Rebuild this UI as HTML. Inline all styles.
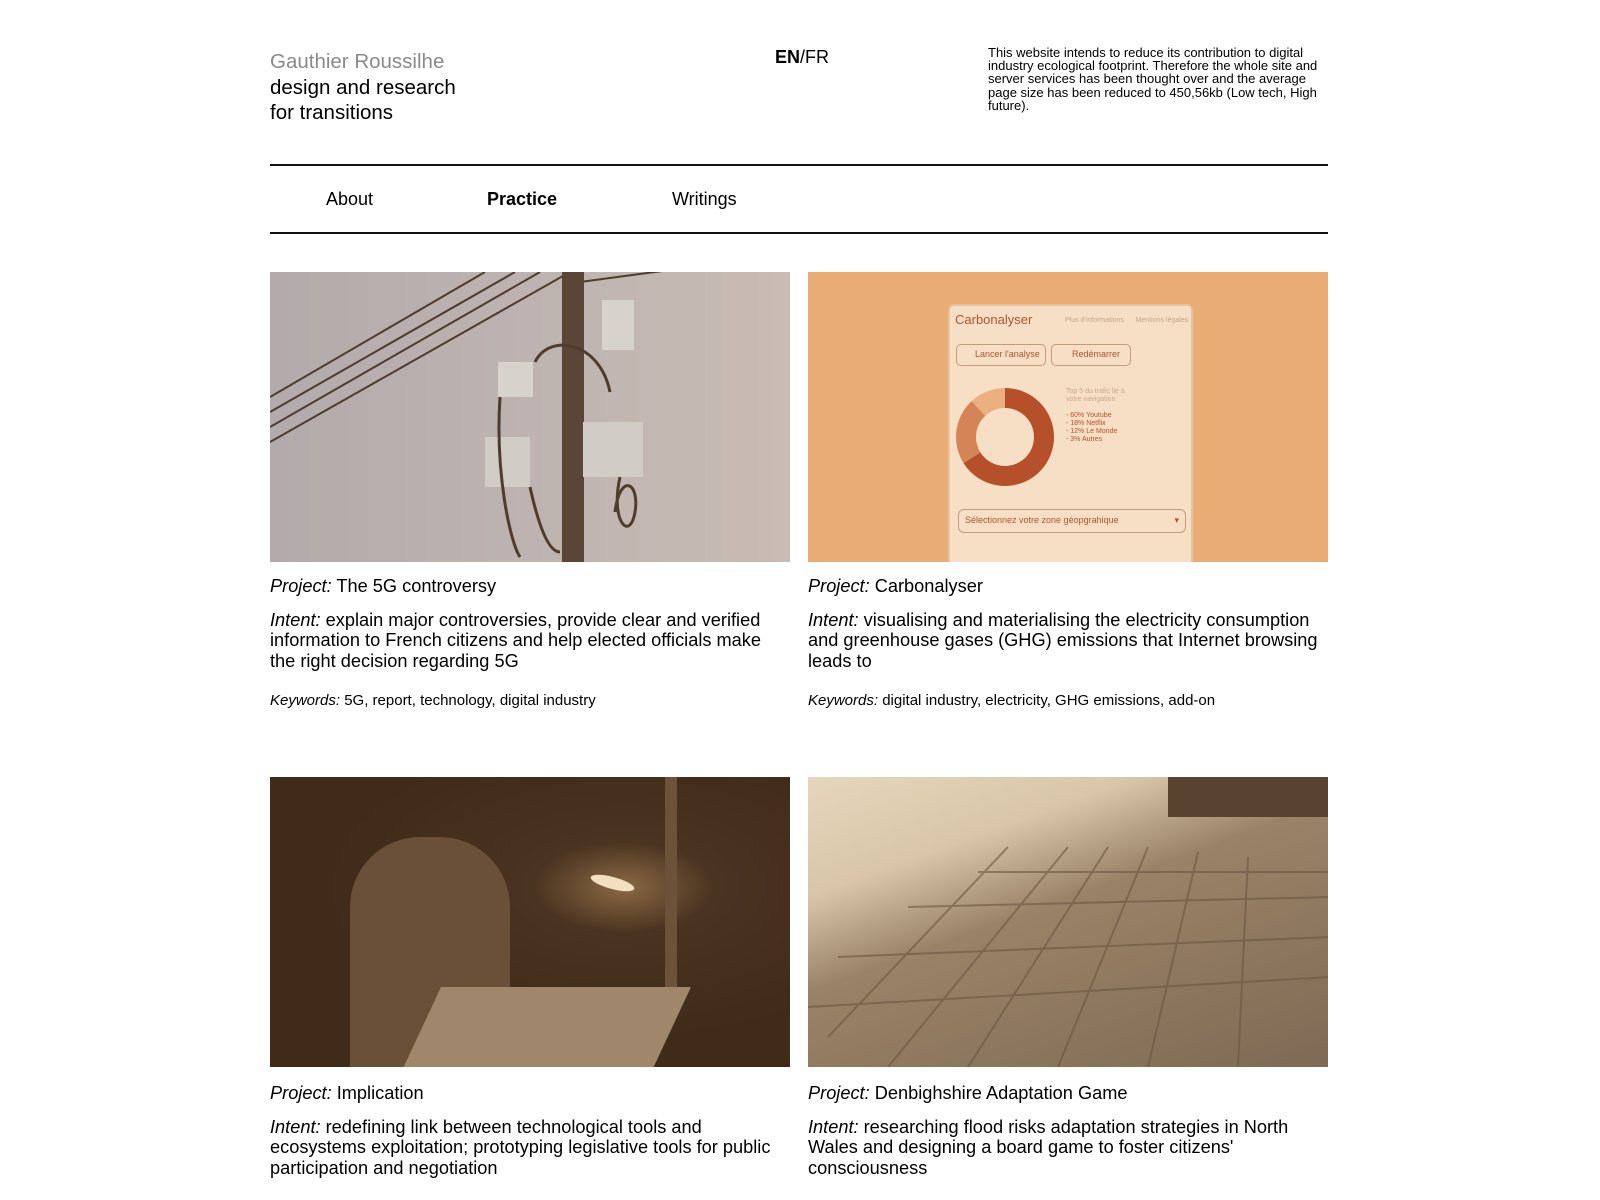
<!DOCTYPE html>
<html><head><meta charset="utf-8"><style>
*{margin:0;padding:0;box-sizing:border-box}
body{width:1600px;height:1200px;overflow:hidden;background:#fff;font-family:"Liberation Sans",sans-serif;color:#000;position:relative}
.a{position:absolute}
.name{left:270px;top:49px;font-size:20.5px;line-height:25.5px}
.name .g{color:#8a8a8a}
.lang{left:775px;top:47px;font-size:18px}
.note{left:988px;top:46px;width:345px;font-size:13px;line-height:13.2px}
.line{left:270px;width:1058px;height:2px;background:#111}
.nav{top:189px;font-size:18px}
.img{width:520px;height:290px;overflow:hidden}
.cap{font-size:18.2px;line-height:20.5px;width:518px}
.kw{font-size:15px}
</style></head><body>
<div class="a name"><span class="g">Gauthier Roussilhe</span><br>design and research<br>for transitions</div>
<div class="a lang"><b>EN</b>/FR</div>
<div class="a note">This website intends to reduce its contribution to digital industry ecological footprint. Therefore the whole site and server services has been thought over and the average page size has been reduced to 450,56kb (Low tech, High future).</div>
<div class="a line" style="top:164px"></div>
<div class="a nav" style="left:326px">About</div>
<div class="a nav" style="left:487px;font-weight:bold">Practice</div>
<div class="a nav" style="left:672px">Writings</div>
<div class="a line" style="top:232px"></div>

<div class="a img" style="left:270px;top:272px;background:linear-gradient(90deg,#b3aaab,#c8bcb4)">
<svg width="520" height="290">
<g stroke="#4e3c2e" stroke-width="2" fill="none">
<path d="M0 125 L215 0"/><path d="M0 140 L245 0"/><path d="M0 155 L270 0"/><path d="M0 170 L300 0"/><path d="M310 10 L400 -2"/>
</g>
<rect x="292" y="0" width="22" height="290" fill="#5a4636"/>
<rect x="228" y="90" width="35" height="35" fill="#d8d2cc"/>
<rect x="332" y="28" width="32" height="50" fill="#d8d2cc"/>
<rect x="215" y="165" width="45" height="50" fill="#d2ccc6"/>
<rect x="313" y="150" width="60" height="55" fill="#d2ccc6"/>
<g stroke="#4e3c2e" stroke-width="3" fill="none"><path d="M230 125 C225 200 240 270 250 285"/><path d="M350 205 C340 250 360 270 365 240 C370 210 350 200 345 240"/><path d="M265 90 C280 60 330 70 340 120"/><path d="M260 215 C270 260 280 280 290 280"/></g>
</svg></div>

<div class="a img" style="left:808px;top:272px;background:#e8ac74">
<div class="a" style="left:140px;top:32px;width:245px;height:262px;background:#f6dfc4;border:2px solid #e3c3a0;border-radius:6px"></div>
<div class="a" style="left:147px;top:40px;color:#b4522e;font-size:13px">Carbonalyser</div>
<div class="a" style="left:257px;top:45px;color:#c7a68a;font-size:7px">Plus d'informations &nbsp;&nbsp;&nbsp;&nbsp; Mentions légales</div>
<div class="a" style="left:148px;top:72px;width:90px;height:22px;border:1.5px solid #c59b7a;border-radius:5px;color:#b4522e;font-size:9px;padding:4px 0 0 18px">Lancer l'analyse</div>
<div class="a" style="left:243px;top:72px;width:80px;height:22px;border:1.5px solid #c59b7a;border-radius:5px;color:#b4522e;font-size:9px;padding:4px 0 0 20px">Redémarrer</div>
<div class="a" style="left:148px;top:116px;width:98px;height:98px;border-radius:50%;background:conic-gradient(#b5502a 0 66%,#d58457 66% 88%,#ebb080 88%)"></div>
<div class="a" style="left:168px;top:136px;width:58px;height:58px;border-radius:50%;background:#f6dfc4"></div>
<div class="a" style="left:258px;top:116px;color:#b4522e;font-size:7px;line-height:8px"><span style="color:#d0a88c">Top 5 du trafic lié à<br>votre navigation</span><br><br>- 60% Youtube<br>- 18% Netflix<br>- 12% Le Monde<br>- 3% Autres</div>
<div class="a" style="left:150px;top:237px;width:228px;height:24px;border:1.5px solid #c59b7a;border-radius:6px;color:#b4522e;font-size:9px;padding:5px 6px">Sélectionnez votre zone géopgrahique<span style="float:right">▾</span></div>
</div>

<div class="a" style="left:270px;top:576px"><div class="cap"><i>Project:</i> The 5G controversy</div>
<div class="cap" style="margin-top:13px"><i>Intent:</i> explain major controversies, provide clear and verified information to French citizens and help elected officials make the right decision regarding 5G</div>
<div class="kw" style="margin-top:21px"><i>Keywords:</i> 5G, report, technology, digital industry</div></div>
<div class="a" style="left:808px;top:576px"><div class="cap"><i>Project:</i> Carbonalyser</div>
<div class="cap" style="margin-top:13px"><i>Intent:</i> visualising and materialising the electricity consumption and greenhouse gases (GHG) emissions that Internet browsing leads to</div>
<div class="kw" style="margin-top:21px"><i>Keywords:</i> digital industry, electricity, GHG emissions, add-on</div></div>

<div class="a img" style="left:270px;top:777px;background:radial-gradient(ellipse at 68% 38%,#8a6a45 0,#4a3320 18%,#3f2b18 60%)">
<div class="a" style="left:395px;top:0;width:12px;height:220px;background:#6b5238"></div>
<div class="a" style="left:80px;top:60px;width:160px;height:230px;border-radius:70px 70px 0 0;background:#6a5038"></div>
<div class="a" style="left:150px;top:210px;width:250px;height:90px;background:#a0866a;transform:skewX(-25deg)"></div>
<div class="a" style="left:320px;top:100px;width:45px;height:12px;border-radius:50%;background:#f3dfc0;transform:rotate(15deg)"></div>
</div>
<div class="a img" style="left:808px;top:777px;background:linear-gradient(160deg,#e6d6bd 0,#d9c6a8 25%,#9a8266 45%,#7e6a55 100%)">
<div class="a" style="left:360px;top:0;width:165px;height:40px;background:#5a4230"></div>
<svg class="a" style="left:0;top:0" width="520" height="290"><g stroke="#6b5642" stroke-width="2" opacity=".6">
<path d="M20 260 L200 70"/><path d="M80 290 L260 70"/><path d="M160 290 L300 70"/><path d="M250 290 L340 70"/><path d="M340 290 L390 75"/><path d="M430 290 L440 80"/>
<path d="M0 230 L523 200"/><path d="M30 180 L523 160"/><path d="M100 130 L523 120"/><path d="M170 95 L523 95"/></g></svg>
</div>

<div class="a" style="left:270px;top:1083px"><div class="cap"><i>Project:</i> Implication</div>
<div class="cap" style="margin-top:13px"><i>Intent:</i> redefining link between technological tools and ecosystems exploitation; prototyping legislative tools for public participation and negotiation</div></div>
<div class="a" style="left:808px;top:1083px"><div class="cap"><i>Project:</i> Denbighshire Adaptation Game</div>
<div class="cap" style="margin-top:13px"><i>Intent:</i> researching flood risks adaptation strategies in North Wales and designing a board game to foster citizens' consciousness</div></div>
</body></html>
